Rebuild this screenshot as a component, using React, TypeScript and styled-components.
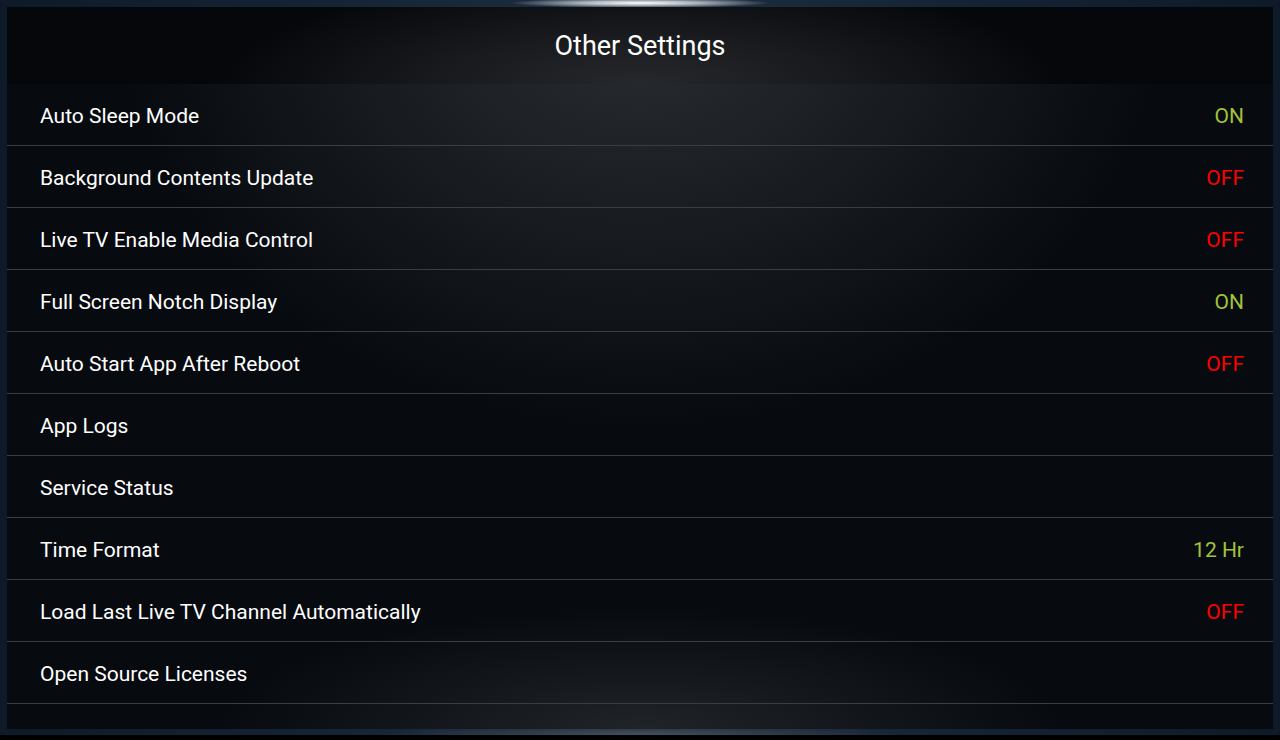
import React from "react";
import styled, { createGlobalStyle } from "styled-components";

const Global = createGlobalStyle`
  html, body { margin: 0; padding: 0; background: #000; }
  body { font-family: Roboto, "Noto Sans", sans-serif; }
`;

const Screen = styled.div`
  width: 1280px;
  height: 740px;
  background: #000;
  display: flex;
  flex-direction: column;
`;

const Frame = styled.div`
  height: 735px;
  box-sizing: border-box;
  padding: 7px 7px 6px 7px;
  background:
    radial-gradient(ellipse 130px 5px at 50% 3px, rgba(255,255,255,1) 0%, rgba(230,235,240,0.7) 45%, rgba(40,50,62,0) 100%),
    radial-gradient(ellipse 260px 12px at 50% 100%, #45505c 0%, #2a3644 60%, rgba(15,28,43,0) 100%),
    linear-gradient(90deg, #0e1a28 0%, #17283a 35%, #1f2e3e 50%, #17283a 65%, #0e1a28 100%);
  display: flex;
`;

const Panel = styled.div`
  flex: 1;
  display: flex;
  flex-direction: column;
  background:
    radial-gradient(ellipse 520px 420px at 50% 0%, #2b2e32 0%, #1b1e22 45%, rgba(10,13,18,0) 100%),
    radial-gradient(ellipse 420px 120px at 50% 100%, #202327 0%, rgba(10,13,18,0) 100%),
    #070a0f;
`;

const Header = styled.div`
  height: 77px;
  display: flex;
  align-items: center;
  justify-content: center;
  background:
    radial-gradient(ellipse 420px 110px at 50% 100%, #26282b 0%, #17191c 50%, rgba(6,8,11,0) 100%),
    #05070a;
`;

const Title = styled.h1`
  margin: 0;
  font-family: Roboto, sans-serif;
  font-weight: 400;
  font-size: 27px;
  color: #ffffff;
`;

const List = styled.div`
  display: flex;
  flex-direction: column;
`;

const Row = styled.div`
  height: 62px;
  box-sizing: border-box;
  border-bottom: 1px solid #3a3d41;
  display: flex;
  align-items: center;
  justify-content: space-between;
  padding: 2px 29px 0 33px;
`;

const Label = styled.span`
  font-size: 21px;
  color: #ffffff;
`;

const Value = styled.span<{ $tone: "on" | "off" }>`
  font-size: 21px;
  color: ${(p) => (p.$tone === "on" ? "#a3c23b" : "#ff0000")};
`;

type Item = { label: string; value?: string; tone?: "on" | "off" };

const items: Item[] = [
  { label: "Auto Sleep Mode", value: "ON", tone: "on" },
  { label: "Background Contents Update", value: "OFF", tone: "off" },
  { label: "Live TV Enable Media Control", value: "OFF", tone: "off" },
  { label: "Full Screen Notch Display", value: "ON", tone: "on" },
  { label: "Auto Start App After Reboot", value: "OFF", tone: "off" },
  { label: "App Logs" },
  { label: "Service Status" },
  { label: "Time Format", value: "12 Hr", tone: "on" },
  { label: "Load Last Live TV Channel Automatically", value: "OFF", tone: "off" },
  { label: "Open Source Licenses" },
];

export default function App() {
  return (
    <Screen>
      <Global />
      <Frame>
        <Panel>
          <Header>
            <Title>Other Settings</Title>
          </Header>
          <List>
            {items.map((it) => (
              <Row key={it.label}>
                <Label>{it.label}</Label>
                {it.value && <Value $tone={it.tone!}>{it.value}</Value>}
              </Row>
            ))}
          </List>
        </Panel>
      </Frame>
    </Screen>
  );
}
